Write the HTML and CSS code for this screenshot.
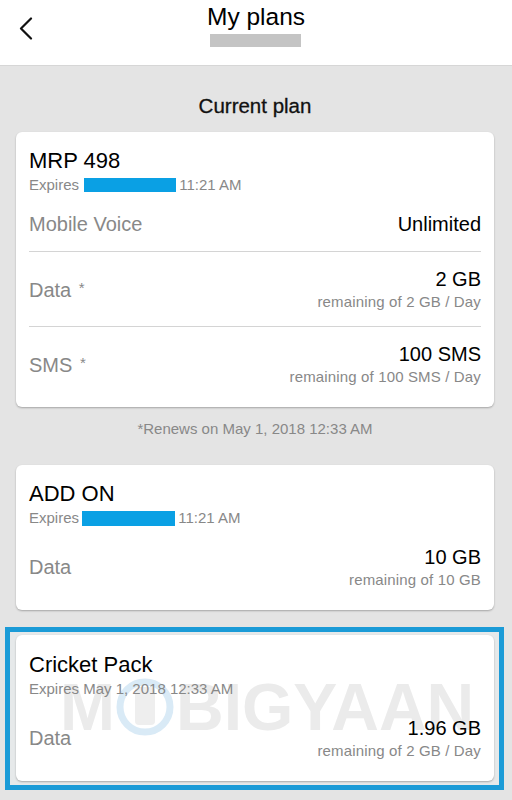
FILE: index.html
```
<!DOCTYPE html>
<html>
<head>
<meta charset="utf-8">
<link rel="stylesheet" href="styles.css">
</head>
<body>
<header class="topbar">
  <div class="back">
    <svg width="14" height="23" viewBox="0 0 14 23"><path d="M12 1.5 L2 11.5 L12 21.5" fill="none" stroke="#111" stroke-width="2.2" stroke-linecap="round" stroke-linejoin="round"/></svg>
  </div>
  <div class="title-wrap">
    <div class="title">My plans</div>
    <div class="subtitle-mask"></div>
  </div>
  <div></div>
</header>
<main class="content">
  <h2 class="section-title">Current plan</h2>

  <section class="card">
    <div class="card-head">
      <div class="plan-name">MRP 498</div>
      <div class="expires">Expires <span class="mask"></span>11:21 AM</div>
    </div>
    <div class="row">
      <div class="label">Mobile Voice</div>
      <div class="value"><div class="amount">Unlimited</div></div>
    </div>
    <div class="divider"></div>
    <div class="row">
      <div class="label">Data <span class="star">*</span></div>
      <div class="value"><div class="amount">2 GB</div><div class="sub">remaining of 2 GB / Day</div></div>
    </div>
    <div class="divider"></div>
    <div class="row">
      <div class="label">SMS <span class="star">*</span></div>
      <div class="value"><div class="amount">100 SMS</div><div class="sub">remaining of 100 SMS / Day</div></div>
    </div>
  </section>

  <p class="renews">*Renews on May 1, 2018 12:33 AM</p>

  <section class="card">
    <div class="card-head">
      <div class="plan-name">ADD ON</div>
      <div class="expires">Expires <span class="mask mask-b"></span>11:21 AM</div>
    </div>
    <div class="row">
      <div class="label">Data</div>
      <div class="value"><div class="amount">10 GB</div><div class="sub">remaining of 10 GB</div></div>
    </div>
  </section>

  <div class="highlight">
    <section class="card card-wm">
      <div class="watermark" aria-hidden="true"><span>M</span><svg class="wm-o" width="58" height="62" viewBox="0 0 58 62"><circle cx="29" cy="31" r="25" fill="none" stroke="#d9eaf6" stroke-width="7"/><rect x="19" y="11" width="20" height="38" rx="4" fill="#eeeeee"/></svg><span>BIGYAAN</span></div>
      <div class="card-head front">
        <div class="plan-name">Cricket Pack</div>
        <div class="expires">Expires May 1, 2018 12:33 AM</div>
      </div>
      <div class="row front">
        <div class="label">Data</div>
        <div class="value"><div class="amount">1.96 GB</div><div class="sub">remaining of 2 GB / Day</div></div>
      </div>
    </section>
  </div>
</main>
</body>
</html>
```
FILE: styles.css
```
* { box-sizing: border-box; }
html, body {
  margin: 0;
  padding: 0;
}
body {
  width: 512px;
  min-height: 800px;
  background: #e4e4e4;
  font-family: "Liberation Sans", Arial, sans-serif;
  color: #000;
}
.topbar {
  height: 66px;
  background: #fff;
  border-bottom: 1px solid #d6d6d6;
  display: grid;
  grid-template-columns: 1fr auto 1fr;
}
.back {
  padding: 17px 0 0 19px;
}
.back svg { display: block; }
.title-wrap {
  display: flex;
  flex-direction: column;
  align-items: center;
  padding-top: 3px;
}
.title {
  font-size: 24.5px;
  line-height: 28px;
  color: #000;
}
.subtitle-mask {
  margin-top: 3px;
  width: 91px;
  height: 13px;
  background: #c4c4c4;
}
.content {
  padding: 28px 18px 0 16px;
  display: flex;
  flex-direction: column;
}
.section-title {
  margin: 0 0 14px;
  font-size: 20.5px;
  line-height: 24px;
  font-weight: normal;
  text-align: center;
  color: #111;
  -webkit-text-stroke: 0.3px #111;
}
.card {
  background: #fff;
  border-radius: 6px;
  box-shadow: 0 1px 2px rgba(0,0,0,0.28);
  padding: 16px 13px 6px;
}
.card-head {
  display: flex;
  flex-direction: column;
  gap: 2px;
  margin-bottom: 3px;
}
.plan-name {
  font-size: 22px;
  line-height: 26px;
}
.expires {
  font-size: 15px;
  line-height: 18px;
  color: #888;
  display: flex;
  align-items: center;
  white-space: pre;
}
.mask {
  display: inline-block;
  width: 92px;
  height: 14px;
  background: #0aa0e4;
  margin-right: 3px;
  margin-left: 1px;
}
.mask-b { width: 93px; height: 15px; margin-left: -1px; }
.row {
  display: flex;
  justify-content: space-between;
  align-items: center;
  padding: 15px 0;
}
.label {
  font-size: 20px;
  line-height: 24px;
  color: #888;
}
.star {
  font-size: 15px;
  vertical-align: 4px;
  margin-left: 2px;
}
.value {
  display: flex;
  flex-direction: column;
  align-items: flex-end;
  gap: 2px;
}
.amount {
  font-size: 20px;
  line-height: 24px;
  color: #000;
}
.sub {
  font-size: 15px;
  line-height: 18px;
  color: #888;
  letter-spacing: 0.15px;
}
.divider {
  height: 1px;
  background: #d4d4d4;
}
.renews {
  margin: 13px 0 27px;
  font-size: 15px;
  line-height: 18px;
  text-align: center;
  color: #888;
}
.highlight {
  margin: 17px -10px 0 -11px;
  border: 5px solid #1b9bd7;
  padding: 3px 5px 4px 6px;
  background: #e6e9ea;
}
.card-wm {
  position: relative;
  padding-top: 17px;
}
.front {
  position: relative;
  z-index: 1;
}
.watermark {
  position: absolute;
  z-index: 0;
  left: 44px;
  top: 39px;
  display: flex;
  align-items: center;
  font-size: 66px;
  line-height: 66px;
  font-weight: bold;
  color: #ebebeb;
  pointer-events: none;
  white-space: nowrap;
}
.wm-o {
  display: block;
  margin: 0 2px 0 1px;
}
```
